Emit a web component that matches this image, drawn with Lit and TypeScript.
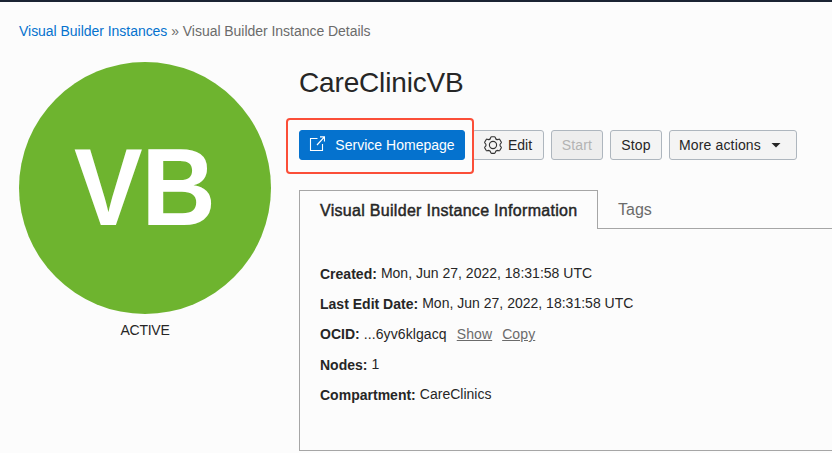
import { LitElement, html, css, svg } from "lit";
import { customElement } from "lit/decorators.js";

const launchIcon = svg`
  <svg class="launch" width="16" height="16" viewBox="0 0 16 16" fill="none" stroke="#fff">
    <path d="M8.5 2.5H1.5V14.5H13.5V8" stroke-width="1.1"/>
    <path d="M8 9L15 1.4M11 .9H15.5V5.4" stroke-width="1.2"/>
  </svg>`;

const gearIcon = svg`
  <svg class="gear" width="18" height="18" viewBox="0 0 18 18" fill="none" stroke="#333" stroke-width="1.15" stroke-linejoin="round">
    <path d="M7.6 .7H10.4Q11 .7 11.2 1.4Q11.6 3.6 13.4 3.6L14.9 3.2Q15.5 3.1 15.9 3.7L17.2 6Q17.5 6.6 17 7.1Q14.9 9 17 10.9Q17.5 11.4 17.2 12L15.9 14.3Q15.5 14.9 14.9 14.8L13.4 14.4Q11.6 14.4 11.2 16.6Q11 17.3 10.4 17.3H7.6Q7 17.3 6.8 16.6Q6.4 14.4 4.6 14.4L3.1 14.8Q2.5 14.9 2.1 14.3L.8 12Q.5 11.4 1 10.9Q3.1 9 1 7.1Q.5 6.6 .8 6L2.1 3.7Q2.5 3.1 3.1 3.2L4.6 3.6Q6.4 3.6 6.8 1.4Q7 .7 7.6 .7Z"/>
    <circle cx="9" cy="9" r="3.6"/>
  </svg>`;

@customElement("app-root")
export class AppRoot extends LitElement {
  static styles = css`
    :host {
      display: block;
      box-sizing: border-box;
      height: 453px;
      overflow: hidden;
      border-top: 2px solid #1b2433;
      background: #fcfcfc;
      color: #262626;
      font: 14px/20px "Liberation Sans", Arial, sans-serif;
    }
    * { box-sizing: border-box; }
    .crumbs { padding: 19px 0 0 19px; color: #6b6b6b; height: 60px; white-space: pre; letter-spacing: -.035px; }
    .crumbs a { color: #0572ce; }
    .body { display: flex; padding-left: 19px; gap: 28px; }
    .side { width: 252px; text-align: center; flex: none; }
    .badge {
      width: 252px; height: 252px; border-radius: 50%; background: #6eb42f;
      display: flex; align-items: center; justify-content: center;
      color: #fff; font-size: 110px; line-height: 110px; font-weight: 700;
      padding: 0 1px 2px 0;
    }
    .badge span { transform: scaleX(.935); letter-spacing: -1px; }
    .status { padding-top: 6px; letter-spacing: -.25px; }
    .main { flex: 1; min-width: 0; }
    h1 { margin: 0; padding-top: 1px; font-size: 28px; font-weight: 400; line-height: 40px; height: 68px; letter-spacing: -.16px; }
    .actions { display: flex; gap: 7px; height: 30px; }
    .btn {
      display: flex; align-items: center; justify-content: center; height: 30px;
      border: 1px solid #aeb6be; border-radius: 3px; background: #f4f4f4;
    }
    .wrap { position: relative; }
    .primary { width: 166px; background: #0572ce; border-color: #0572ce; color: #fff; gap: 10px; letter-spacing: .02px; }
    .launch { margin-bottom: 2px; }
    .ring {
      position: absolute; left: -13px; top: -12px; width: 188px; height: 56px;
      border: 2px solid #fb4e38; border-radius: 4px; z-index: 1;
    }
    .edit { width: 72px; gap: 6px; }
    .start { width: 52px; background: #ededed; color: #b3b3b3; letter-spacing: .15px; }
    .stop { width: 52px; letter-spacing: .15px; }
    .more { width: 128px; justify-content: space-between; padding: 0 15px 0 9px; letter-spacing: .15px; }
    .caret { width: 10px; height: 5px; background: #262626; clip-path: polygon(0 0, 100% 0, 50% 100%); }
    .tabs { display: flex; margin-top: 30px; height: 39px; font-size: 16px; line-height: 40px; }
    .tab { border: 1px solid #a6a6a6; border-bottom: 0; width: 299px; padding-left: 20px; letter-spacing: .3px; line-height: 39px; -webkit-text-stroke: .45px #262626; white-space: nowrap; }
    .rest { flex: 1; border-bottom: 1px solid #a6a6a6; padding-left: 20px; color: #6b6b6b; }
    .panel { height: 222px; border: 1px solid #a6a6a6; border-width: 0 0 1px 1px; padding: 34px 0 0 20px; }
    .row { display: flex; height: 30px; gap: 4px; white-space: nowrap; letter-spacing: .01px; }
    .row b { padding-top: 1px; }
    .level { height: 31px; }
    .level > span, .level > a { padding-top: 1px; letter-spacing: .1px; }
    .level a { color: #6b6b6b; text-decoration: underline; text-underline-offset: 1px; margin-left: 6px; }
  `;

  render() {
    return html`
      <nav class="crumbs"><a>Visual Builder Instances</a> » Visual Builder Instance Details</nav>
      <div class="body">
        <aside class="side">
          <div class="badge"><span>VB</span></div>
          <div class="status">ACTIVE</div>
        </aside>
        <main class="main">
          <h1>CareClinicVB</h1>
          <div class="actions">
            <div class="wrap">
              <div class="btn primary">${launchIcon}<span>Service Homepage</span></div>
              <div class="ring"></div>
            </div>
            <div class="btn edit">${gearIcon}<span>Edit</span></div>
            <div class="btn start">Start</div>
            <div class="btn stop">Stop</div>
            <div class="btn more"><span>More actions</span><i class="caret"></i></div>
          </div>
          <div class="tabs">
            <div class="tab">Visual Builder Instance Information</div>
            <div class="rest">Tags</div>
          </div>
          <section class="panel">
            <div class="row"><b>Created:</b><span>Mon, Jun 27, 2022, 18:31:58 UTC</span></div>
            <div class="row"><b>Last Edit Date:</b><span>Mon, Jun 27, 2022, 18:31:58 UTC</span></div>
            <div class="row level"><b>OCID:</b><span>...6yv6klgacq</span><a>Show</a><a>Copy</a></div>
            <div class="row"><b>Nodes:</b><span>1</span></div>
            <div class="row"><b>Compartment:</b><span>CareClinics</span></div>
          </section>
        </main>
      </div>
    `;
  }
}
